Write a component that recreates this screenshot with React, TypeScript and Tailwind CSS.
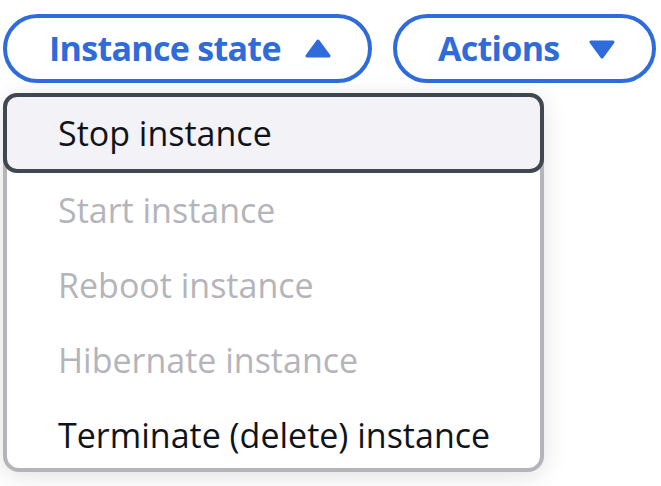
import React from "react";

const font = { fontFamily: '"Open Sans", "Noto Sans", sans-serif' };

function Caret({ up }: { up?: boolean }) {
  return (
    <svg viewBox="0 0 26 20" className="h-[20px] w-[26px] shrink-0" aria-hidden>
      <path
        d={up ? "M13 2 L24 17 H2 Z" : "M2 3 H24 L13 18 Z"}
        fill="#2f6bd9"
        stroke="#2f6bd9"
        strokeWidth="3"
        strokeLinejoin="round"
      />
    </svg>
  );
}

const items = [
  { label: "Stop instance", disabled: false },
  { label: "Start instance", disabled: true },
  { label: "Reboot instance", disabled: true },
  { label: "Hibernate instance", disabled: true },
  { label: "Terminate (delete) instance", disabled: false },
];

export default function App() {
  return (
    <div className="h-[486px] w-[661px] overflow-hidden bg-white" style={font}>
      <div className="flex gap-[21px] pl-[3px] pt-[14px]">
        <button
          type="button"
          className="flex h-[69px] w-[369px] items-center rounded-full border-4 border-[#2f6bd9] pl-[42px] pr-[37px] text-[34px] font-bold tracking-[-0.7px] text-[#2f6bd9]"
        >
          <span className="flex-1 text-left">Instance state</span>
          <Caret up />
        </button>
        <button
          type="button"
          className="flex h-[69px] w-[263px] items-center rounded-full border-4 border-[#2f6bd9] pl-[41px] pr-[37px] text-[34px] font-bold tracking-[-0.7px] text-[#2f6bd9]"
        >
          <span className="flex-1 text-left">Actions</span>
          <Caret />
        </button>
      </div>

      <div className="ml-[3px] mt-[10px] flex h-[379px] w-[541px] flex-col rounded-[16px] border-4 border-[#b4b4bb] bg-white shadow-[0_4px_24px_rgba(0,0,0,0.12)]">
        {items.map((item, i) => (
          <div
            key={item.label}
            className={
              i === 0
                ? "-mx-[4px] -mt-[4px] flex h-[80px] shrink-0 items-center rounded-[14px] border-4 border-[#414750] bg-[#f2f2f7] pl-[51px] text-[34px] text-[#0f141a]"
                : i === items.length - 1
                ? "flex h-[70px] shrink-0 items-center pl-[51px] pt-[5px] text-[34px] text-[#0f141a]"
                : "flex h-[75px] shrink-0 items-center pl-[51px] text-[34px] text-[#b4b4bb]"
            }
          >
            {item.label}
          </div>
        ))}
      </div>
    </div>
  );
}
